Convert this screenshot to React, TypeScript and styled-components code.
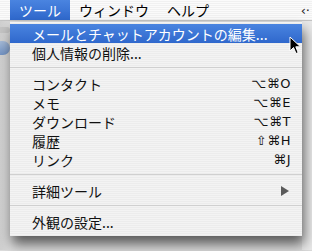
import styled, { createGlobalStyle } from "styled-components";

const GlobalStyle = createGlobalStyle`
  html, body {
    margin: 0;
    padding: 0;
    background: #e4e4e4;
  }
  * {
    box-sizing: border-box;
  }
`;

const Screen = styled.div`
  position: relative;
  width: 312px;
  height: 251px;
  overflow: hidden;
  font-family: "Noto Sans CJK JP", "Noto Sans", sans-serif;
  background: #dcdcdc;
`;

const MenuBar = styled.div`
  display: flex;
  align-items: stretch;
  height: 21px;
  padding-left: 10px;
  background: repeating-linear-gradient(
    to bottom,
    #fbfbfb 0px,
    #fbfbfb 1px,
    #f1f1f1 1px,
    #f1f1f1 2px
  );
  border-bottom: 1px solid #c4c4c4;
`;

const BarItem = styled.div<{ $active?: boolean }>`
  display: flex;
  align-items: center;
  padding: 0 9px;
  font-size: 14px;
  line-height: 1;
  color: ${(p) => (p.$active ? "#fff" : "#000")};
  background: ${(p) =>
    p.$active ? "linear-gradient(to bottom, #4a84e0, #2f68cc)" : "transparent"};
`;

const BarEdge = styled.div`
  margin-left: auto;
  display: flex;
  align-items: center;
  padding-right: 2px;
  font-size: 13px;
  color: #222;
  font-family: "DejaVu Sans", sans-serif;
`;

const Backdrop = styled.div`
  display: grid;
  grid-template-columns: 10px 1fr 10px;
  height: 229px;
`;

const LeftStrip = styled.div`
  display: flex;
  flex-direction: column;
  gap: 8px;
  padding-top: 6px;
  background: linear-gradient(to right, #cfcfcf, #dadada);
`;

const StripButton = styled.div`
  width: 10px;
  height: 14px;
  border-radius: 0 7px 7px 0;
  background: linear-gradient(to bottom, #a6bbd8, #7293c4);
  &:first-child {
    background: #c4c4c4;
    height: 6px;
  }
`;

const RightStrip = styled.div`
  background: #e9e9e9;
  grid-column: 3;
`;

const Menu = styled.div`
  position: absolute;
  top: 22px;
  left: 10px;
  width: 292px;
  padding: 2px 0 5px;
  background: repeating-linear-gradient(
    to bottom,
    #f3f3f3 0px,
    #f3f3f3 1px,
    #ececec 1px,
    #ececec 2px
  );
  box-shadow: 2px 8px 12px rgba(0, 0, 0, 0.6);
`;

const Item = styled.div<{ $active?: boolean }>`
  display: flex;
  align-items: center;
  height: 19px;
  padding: 0 11px 0 22px;
  font-size: 14px;
  line-height: 1;
  color: ${(p) => (p.$active ? "#fff" : "#111")};
  background: ${(p) =>
    p.$active ? "linear-gradient(to bottom, #4a84e0, #2f68cc)" : "transparent"};
`;

const Label = styled.span`
  flex: 1;
  white-space: nowrap;
`;

const Shortcut = styled.span`
  font-family: "DejaVu Sans", sans-serif;
  font-size: 13px;
  letter-spacing: 0.5px;
`;

const Arrow = styled.span`
  width: 0;
  height: 0;
  border-top: 5px solid transparent;
  border-bottom: 5px solid transparent;
  border-left: 8px solid #5a5a5a;
  margin-right: 2px;
`;

const Separator = styled.div`
  height: 1px;
  margin: 5px 0 6px;
  background: #d0d0d0;
`;

const Cursor = styled.svg`
  position: absolute;
  left: 289px;
  top: 36px;
`;

type Row = { label: string; shortcut?: string; submenu?: boolean } | "sep";

const rows: Row[] = [
  { label: "メールとチャットアカウントの編集..." },
  { label: "個人情報の削除..." },
  "sep",
  { label: "コンタクト", shortcut: "⌥⌘O" },
  { label: "メモ", shortcut: "⌥⌘E" },
  { label: "ダウンロード", shortcut: "⌥⌘T" },
  { label: "履歴", shortcut: "⇧⌘H" },
  { label: "リンク", shortcut: "⌘J" },
  "sep",
  { label: "詳細ツール", submenu: true },
  "sep",
  { label: "外観の設定..." },
];

export default function App() {
  return (
    <Screen>
      <GlobalStyle />
      <MenuBar>
        <BarItem $active>ツール</BarItem>
        <BarItem>ウィンドウ</BarItem>
        <BarItem>ヘルプ</BarItem>
        <BarEdge>‹·</BarEdge>
      </MenuBar>
      <Backdrop>
        <LeftStrip>
          <StripButton />
          <StripButton />
        </LeftStrip>
        <RightStrip />
      </Backdrop>
      <Menu>
        {rows.map((r, i) =>
          r === "sep" ? (
            <Separator key={i} />
          ) : (
            <Item key={i} $active={i === 0}>
              <Label>{r.label}</Label>
              {r.shortcut && <Shortcut>{r.shortcut}</Shortcut>}
              {r.submenu && <Arrow />}
            </Item>
          )
        )}
      </Menu>
      <Cursor width="13" height="19" viewBox="0 0 13 19">
        <path
          d="M1 1 L1 15 L4.5 11.5 L7 17.5 L9.2 16.6 L6.8 10.8 L11.5 10.8 Z"
          fill="#000"
          stroke="#fff"
          strokeWidth="1"
          strokeLinejoin="round"
        />
      </Cursor>
    </Screen>
  );
}
